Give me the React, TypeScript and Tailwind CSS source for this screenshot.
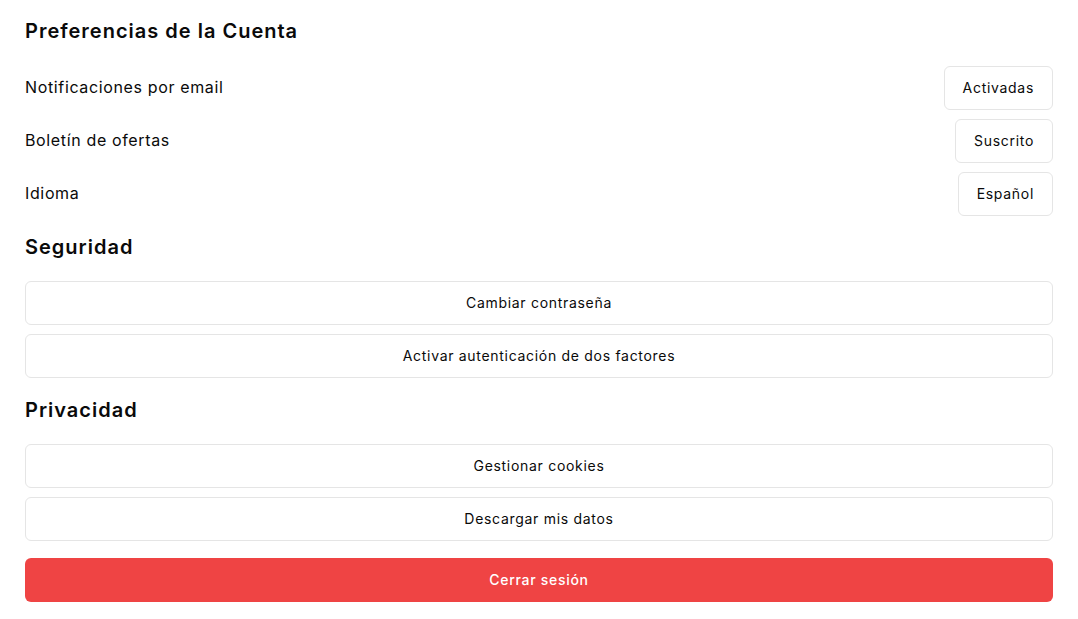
import React from "react";

const font = { fontFamily: "Inter, 'Liberation Sans', sans-serif" };

function SettingRow({ label, value }: { label: string; value: string }) {
  return (
    <div className="flex items-center justify-between">
      <span className="-mt-[2px] text-base tracking-[0.04em] text-[#0a0a0a]">{label}</span>
      <button className="h-[44px] rounded-md border border-[#e5e5e5] bg-white px-[18px] text-sm font-normal tracking-[0.05em] text-[#0a0a0a]">
        {value}
      </button>
    </div>
  );
}

function WideButton({ label }: { label: string }) {
  return (
    <button className="h-[44px] w-full rounded-md border border-[#e5e5e5] bg-white text-sm font-normal tracking-[0.05em] text-[#0a0a0a]">
      {label}
    </button>
  );
}

export default function App() {
  return (
    <div style={font} className="min-h-screen bg-white px-[25px] pt-[17px] text-[#0a0a0a]">
      <h2 className="mb-[21px] text-xl font-semibold leading-7 tracking-[0.05em]">Preferencias de la Cuenta</h2>
      <div className="flex flex-col gap-[9px]">
        <SettingRow label="Notificaciones por email" value="Activadas" />
        <SettingRow label="Boletín de ofertas" value="Suscrito" />
        <SettingRow label="Idioma" value="Español" />
      </div>

      <h2 className="mt-[17px] mb-5 text-xl font-semibold leading-7 tracking-[0.05em]">Seguridad</h2>
      <div className="flex flex-col gap-[9px]">
        <WideButton label="Cambiar contraseña" />
        <WideButton label="Activar autenticación de dos factores" />
      </div>

      <h2 className="mt-[18px] mb-5 text-xl font-semibold leading-7 tracking-[0.05em]">Privacidad</h2>
      <div className="flex flex-col gap-[9px]">
        <WideButton label="Gestionar cookies" />
        <WideButton label="Descargar mis datos" />
      </div>

      <button className="mt-[17px] h-[44px] w-full rounded-md bg-[#ef4444] text-sm font-medium tracking-[0.05em] text-white">
        Cerrar sesión
      </button>
    </div>
  );
}
